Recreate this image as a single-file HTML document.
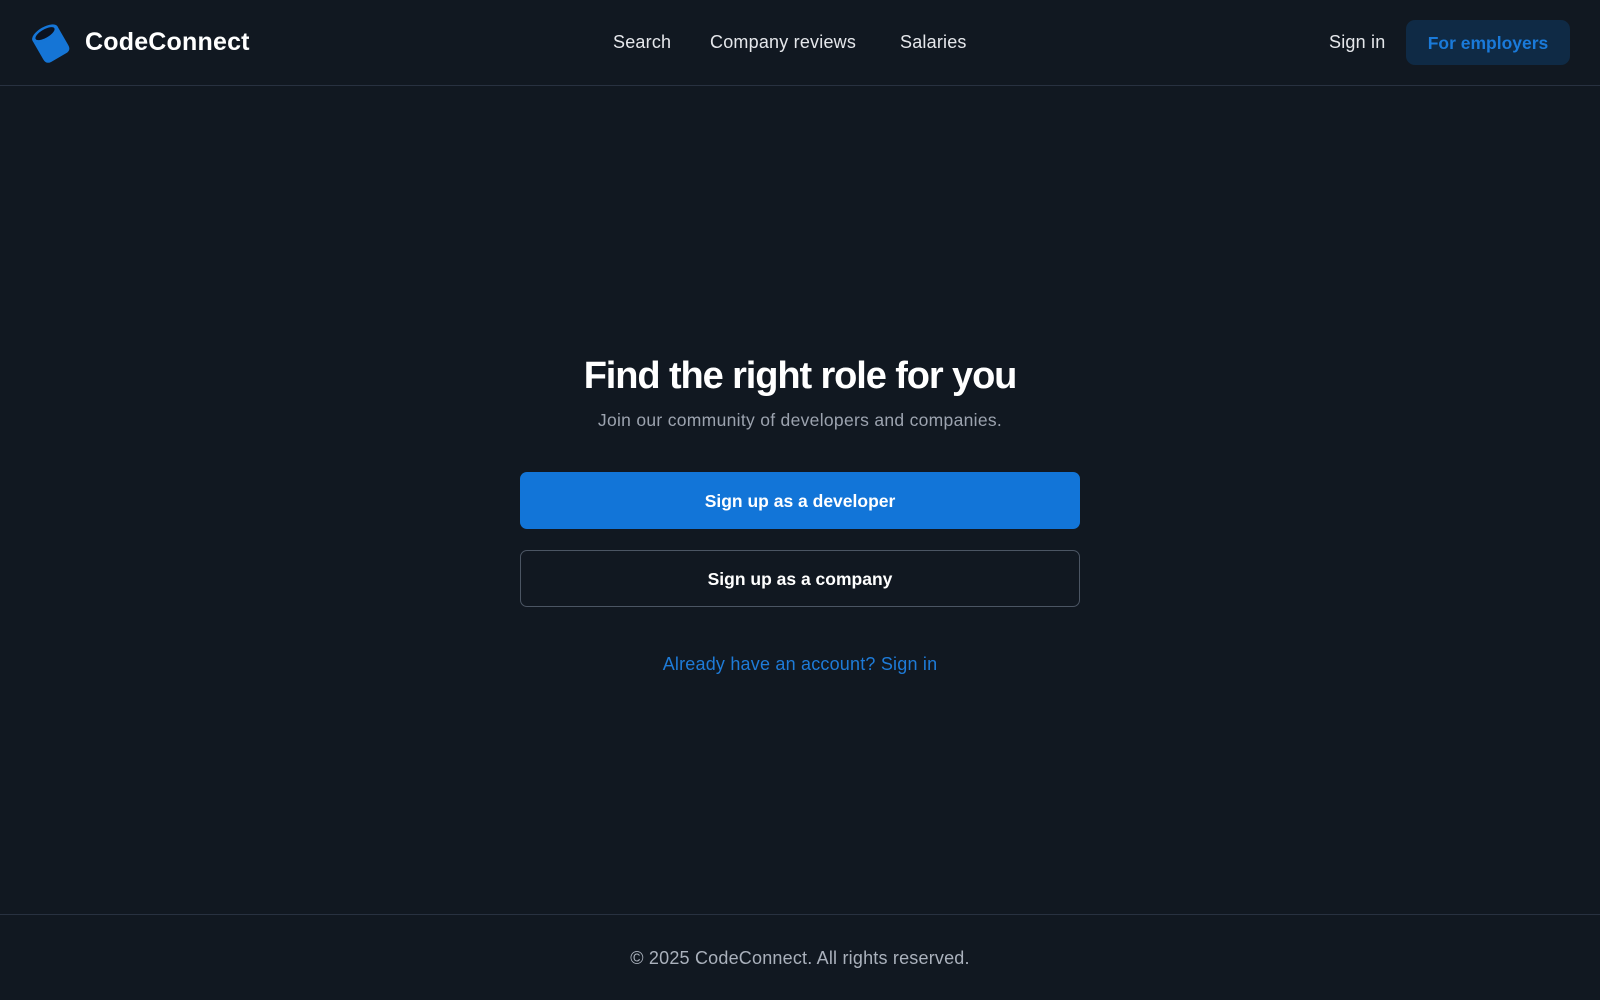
<!DOCTYPE html>
<html><head><style>
*{margin:0;padding:0;box-sizing:border-box}
body{width:1600px;height:1000px;background:#111821;font-family:"Liberation Sans",sans-serif;color:#fff;position:relative;overflow:hidden}
.hdr{position:absolute;left:0;top:0;width:1600px;height:86px;border-bottom:1px solid #283140}
.abs{position:absolute;white-space:nowrap}
.nav{font-size:18px;color:#e5e7eb;top:32px;letter-spacing:0.2px}
.btn{position:absolute;left:520px;width:560px;height:57px;border-radius:7px;display:flex;align-items:center;justify-content:center;font-weight:bold;font-size:17.5px;padding-top:2px}
</style></head><body>
<div class="hdr">
<svg class="abs" style="left:30px;top:22px" width="42" height="42" viewBox="0 0 42 42">
<g transform="translate(21 22) rotate(-30) scale(1.2)">
<path d="M-12 -10 L12 -10 L12 8 Q12 13 7 13 L-7 13 Q-12 13 -12 8 Z" fill="#1575d6"/>
<ellipse cx="0" cy="-10" rx="12" ry="5.5" fill="#1575d6"/>
<ellipse cx="0" cy="-10" rx="9" ry="3.5" fill="#0b1220"/>
</g>
</svg>
<div class="abs" style="left:85px;top:28px;font-size:25px;font-weight:bold;letter-spacing:0.2px">CodeConnect</div>
<div class="abs nav" style="left:613px">Search</div>
<div class="abs nav" style="left:710px">Company reviews</div>
<div class="abs nav" style="left:900px">Salaries</div>
<div class="abs nav" style="left:1329px">Sign in</div>
<div class="abs" style="left:1406px;top:20px;width:164px;height:45px;border-radius:9px;background:#0f2a45;color:#1a7ad9;font-weight:bold;font-size:17.5px;display:flex;align-items:center;justify-content:center;padding-top:2px">For employers</div>
</div>
<div class="abs" style="left:0;width:1600px;text-align:center;top:355px;font-size:38px;font-weight:bold;letter-spacing:-1.1px">Find the right role for you</div>
<div class="abs" style="left:0;width:1600px;text-align:center;top:410px;font-size:17.5px;color:#9ca3af;letter-spacing:0.3px">Join our community of developers and companies.</div>
<div class="btn" style="top:472px;background:#1275d8">Sign up as a developer</div>
<div class="btn" style="top:550px;border:1px solid #4b5563">Sign up as a company</div>
<div class="abs" style="left:0;width:1600px;text-align:center;top:654px;font-size:18px;color:#1e7bd8;letter-spacing:0.2px">Already have an account? Sign in</div>
<div class="abs" style="left:0;top:914px;width:1600px;border-top:1px solid #283140"></div>
<div class="abs" style="left:0;width:1600px;text-align:center;top:948px;font-size:18px;color:#aab1bc;letter-spacing:0.2px">© 2025 CodeConnect. All rights reserved.</div>
</body></html>
